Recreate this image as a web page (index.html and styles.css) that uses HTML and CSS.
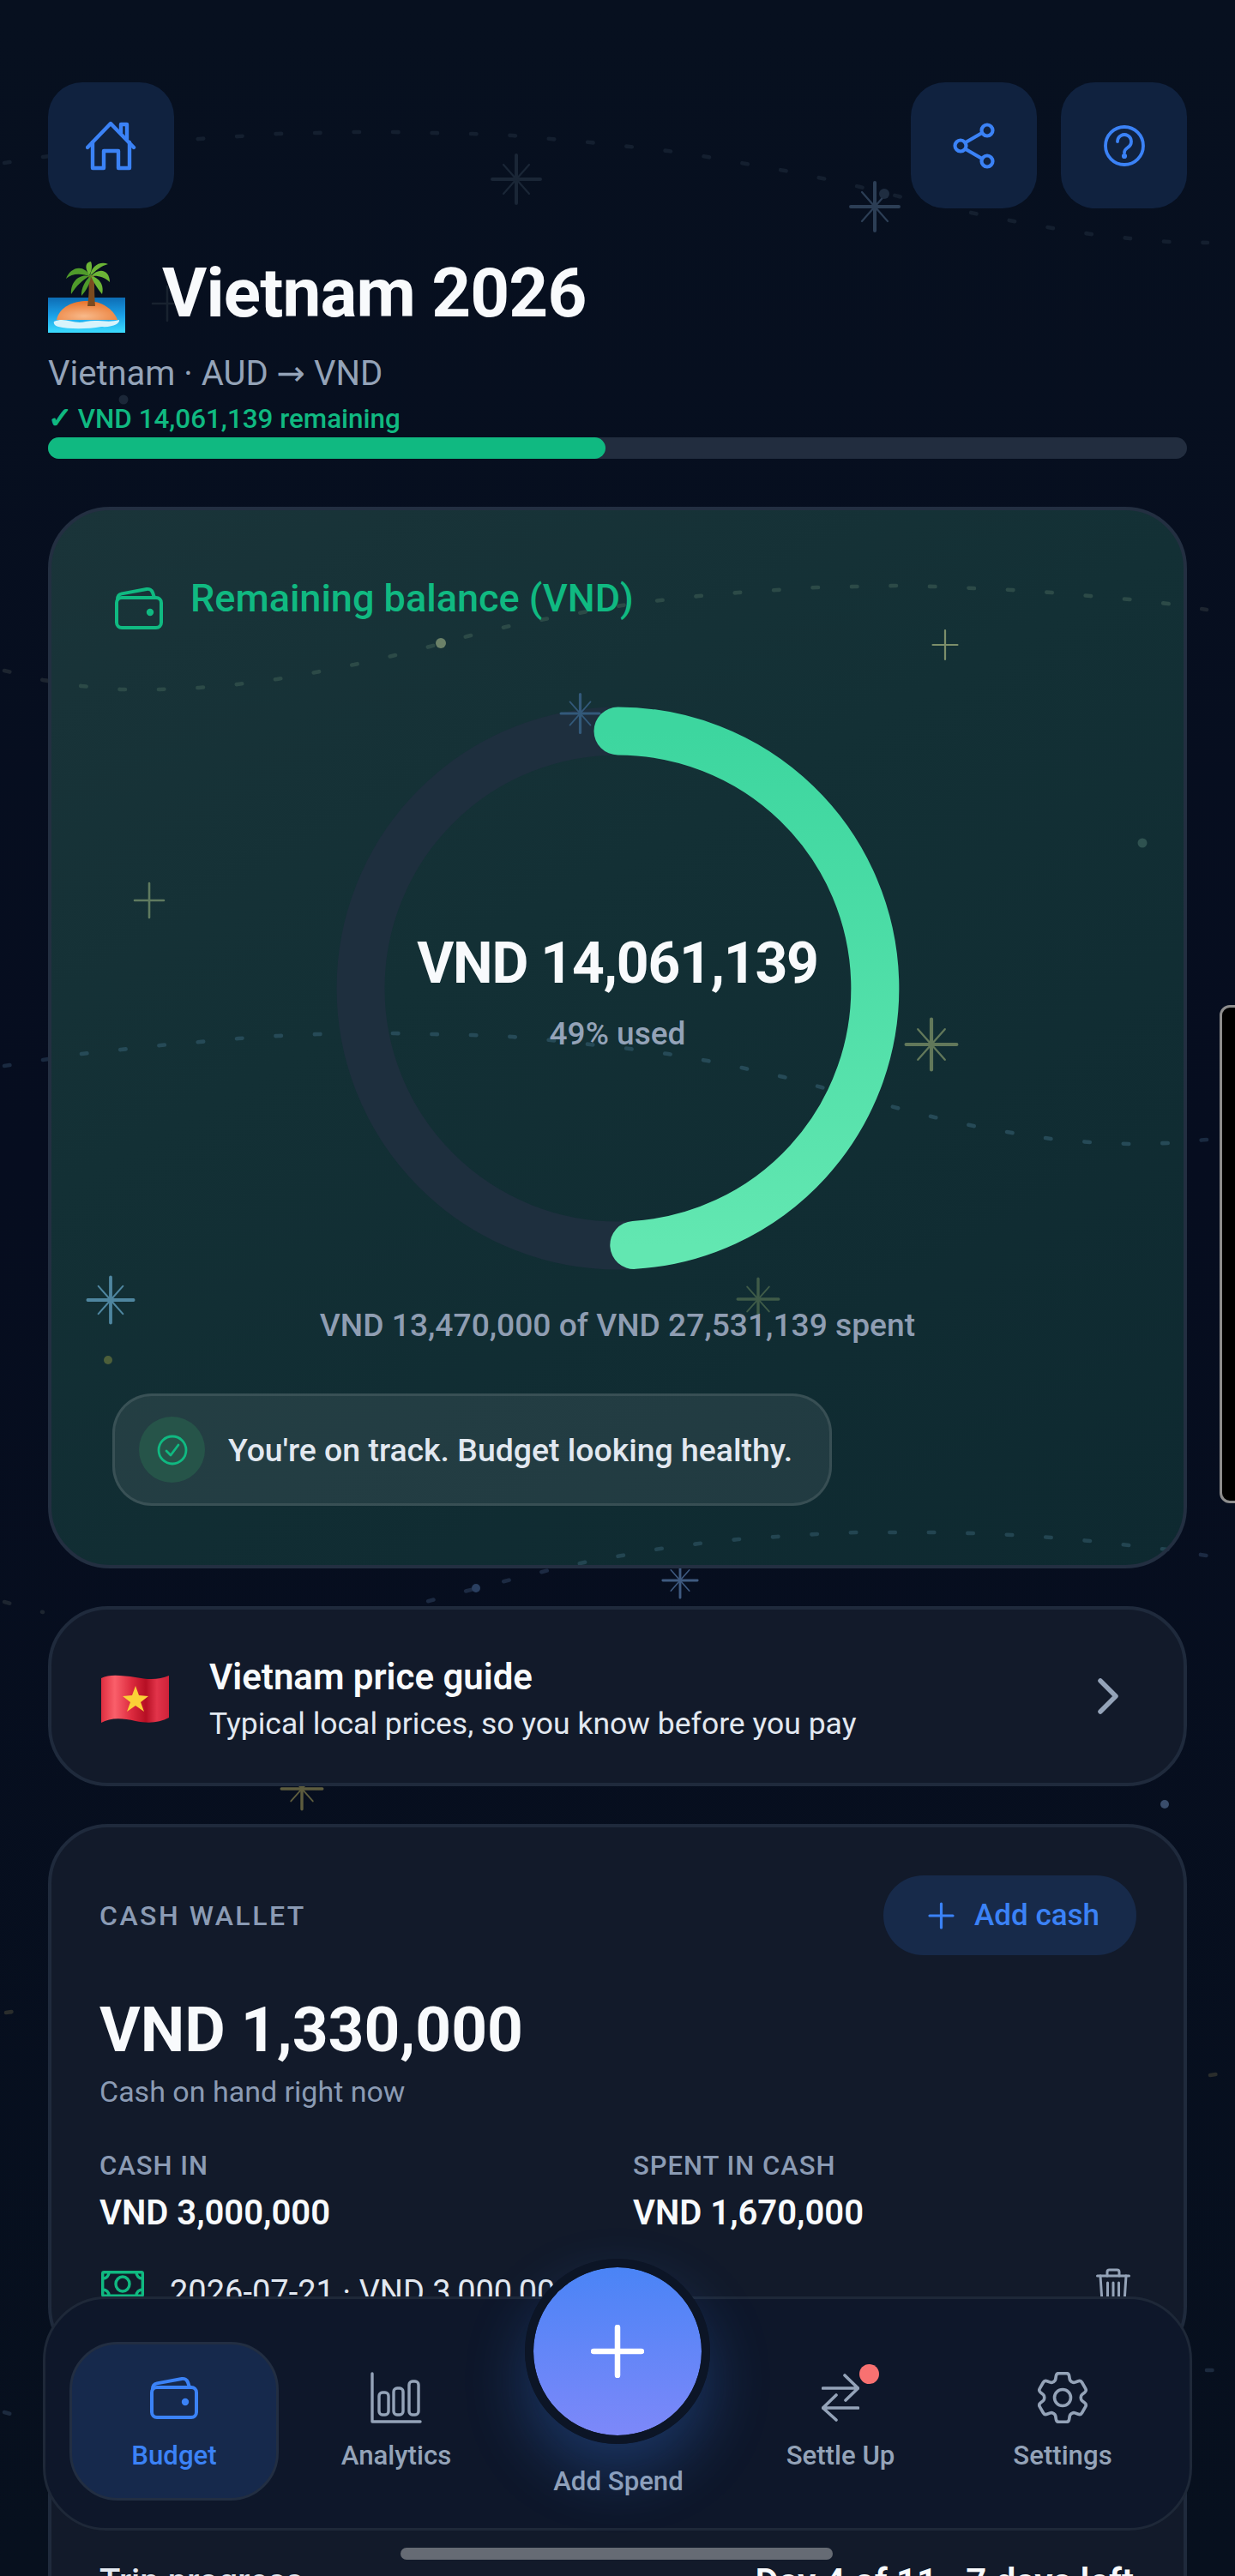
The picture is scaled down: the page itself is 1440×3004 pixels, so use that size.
FILE: index.html
```html
<!DOCTYPE html>
<html lang="en">
<head>
  <meta charset="UTF-8">
  <meta name="viewport" content="width=device-width, initial-scale=1.0">
  <title>Vietnam 2026</title>
  <link rel="stylesheet" href="styles.css">
</head>
<body>
<div class="page">

  <!-- decorative constellation behind the cards -->
  <svg class="sky" viewBox="0 0 1440 3004" fill="none" stroke-linecap="round" aria-hidden="true">
    <defs>
      <g id="spark">
        <path d="M-28 0H28M0 -28V28" stroke-width="4"/>
        <path d="M-15 -17L15 17M15 -17L-15 17" stroke-width="2.2"/>
      </g>
      <path id="plus" d="M-17 0H17M0 -20V20" stroke-width="2.6"/>
      <polyline id="line1" class="dash" points="5,190 50,183 96,177 142,171 187,166 232,162 278,159 324,156 370,155 415,154 460,154 506,155 551,156 597,158 642,162 688,166 734,171 779,176 825,183 870,191 915,199 959,208 1003,218 1048,229 1092,239 1137,249 1182,258 1227,266 1272,273 1317,278 1363,282 1408,283"/>
      <polyline id="line2" class="dash" points="5,782 50,793 95,800 141,804 186,804 232,802 277,798 323,792 368,784 413,775 457,765 501,754 545,742 590,731 635,722 680,714 725,706 770,700 815,695 861,691 906,688 952,685 997,684 1043,683 1089,684 1135,686 1180,688 1226,691 1271,695 1317,699 1362,704 1407,711"/>
      <polyline id="line3" class="dash" points="5,1243 50,1236 95,1229 141,1224 187,1219 233,1215 278,1211 324,1208 370,1206 415,1205 460,1205 506,1206 551,1207 597,1209 642,1213 688,1218 734,1223 779,1229 825,1237 869,1246 914,1256 958,1268 1002,1280 1046,1292 1090,1303 1135,1313 1180,1321 1225,1328 1271,1332 1316,1334 1362,1333 1407,1329"/>
      <polyline id="line4" class="dash" points="455,1878 500,1867 545,1855 592,1843 636,1832 681,1822 725,1814 770,1806 815,1800 861,1795 906,1792 952,1789 998,1787 1044,1787 1090,1787 1135,1788 1180,1790 1226,1793 1271,1797 1317,1802 1362,1807 1407,1814"/>
    </defs>

    <use href="#line1" stroke="#141f2f"/>
    <use href="#line2" stroke="#1d2530"/>
    <use href="#line3" stroke="#1a2a40"/>
    <use href="#line4" stroke="#1c2a42"/>
    <polyline class="dash" stroke="#1d2530" points="5,1868 50,1880"/>
    <polyline class="dash" stroke="#2a2d2c" points="7,2347 51,2341"/>
    <polyline class="dash" stroke="#2a2d2c" points="1411,2420 1430,2417"/>
    <polyline class="dash" stroke="#1c2a3e" points="5,2813 46,2824"/>
    <polyline class="dash" stroke="#1c2a3e" points="1407,2764 1430,2764"/>

    <use href="#spark" transform="translate(602 209)" stroke="#1a2636"/>
    <use href="#spark" transform="translate(1020 241)" stroke="#2c3e55"/>
    <use href="#plus" transform="translate(195 354)" stroke="#18222f"/>
    <use href="#spark" transform="translate(793 1843) scale(.72)" stroke="#3f5a80"/>
    <use href="#spark" transform="translate(352 2086) scale(.85)" stroke="#5d5c3e"/>

    <g stroke="none">
      <circle cx="1031" cy="226" r="6" fill="#1f2d40"/>
      <circle cx="144" cy="466" r="5.5" fill="#1b2738"/>
      <circle cx="555" cy="1852" r="5" fill="#2a3f60"/>
      <circle cx="1358" cy="2104" r="5" fill="#3a4d6b"/>
    </g>
  </svg>

  <header class="topbar">
    <a class="icon-btn">
      <svg width="60" height="58" viewBox="0 0 60 58" fill="none" stroke="#3b82f6" stroke-width="4.4" stroke-linecap="round" stroke-linejoin="round">
        <path d="M2 31L29 3L56 31"/>
        <path d="M41 14V4H48V21"/>
        <path d="M8 25V55H21V35H38V55H51V25"/>
      </svg>
    </a>
    <div class="topbar-right">
      <a class="icon-btn">
        <svg width="50" height="54" viewBox="0 0 50 54" fill="none" stroke="#3b82f6" stroke-width="4.2">
          <circle cx="9" cy="27" r="6.5"/>
          <circle cx="40" cy="9" r="6.5"/>
          <circle cx="40" cy="45" r="6.5"/>
          <path d="M15 23L34 12M15 31L34 42"/>
        </svg>
      </a>
      <a class="icon-btn">
        <svg width="50" height="50" viewBox="0 0 50 50" fill="none" stroke="#3b82f6" stroke-width="3.8" stroke-linecap="round">
          <circle cx="25" cy="25" r="22"/>
          <path d="M17 20a8 8 0 1 1 12 7c-3 2-4 3-4 6"/>
          <circle cx="25" cy="37" r="1.2" fill="#3b82f6"/>
        </svg>
      </a>
    </div>
  </header>

  <div class="title-row">
    <svg class="island" width="90" height="83" viewBox="0 0 90 83">
      <defs>
        <linearGradient id="sea" x1="0" y1="0" x2="0" y2="1">
          <stop offset="0" stop-color="#0d6cb4"/>
          <stop offset=".5" stop-color="#1a9fe6"/>
          <stop offset="1" stop-color="#3cdcff"/>
        </linearGradient>
        <radialGradient id="sand" cx=".45" cy=".8" r=".75">
          <stop offset="0" stop-color="#f8b98a"/>
          <stop offset="1" stop-color="#e9772f"/>
        </radialGradient>
      </defs>
      <rect y="42" width="90" height="41" fill="url(#sea)"/>
      <path d="M10 68C13 53 29 46 46 46C62 46 76 55 81 68Z" fill="url(#sand)"/>
      <path d="M7 70C20 64 30 74 44 70C58 67 70 72 83 68C84 72 76 77 62 76C46 79 24 79 12 76C8 75 6 72 7 70Z" fill="#d8f3fb"/>
      <path d="M47 16L54 16C54 28 54 38 55 52L46 52C48 38 48 28 47 16Z" fill="#7b4a1f"/>
      <g fill="#4f9a2b">
        <path d="M50 18C42 2 26 6 21 20C28 14 38 13 50 18Z"/>
        <path d="M48 17C36 14 26 24 27 38C33 28 40 22 48 17Z"/>
        <path d="M50 17C44 20 38 32 39 40C45 33 49 26 50 17Z"/>
      </g>
      <g fill="#6cb536">
        <path d="M49 17C50 6 60 -1 70 3C62 5 56 10 49 17Z"/>
        <path d="M48 16C42 6 44 1 50 0C52 5 51 11 48 16Z"/>
        <path d="M50 17C60 6 72 10 72 24C66 18 58 16 50 17Z"/>
        <path d="M50 17C58 18 66 26 63 38C58 32 53 24 50 17Z"/>
      </g>
    </svg>
    <h1 class="trip-title">Vietnam 2026</h1>
  </div>
  <p class="trip-sub">Vietnam · AUD → VND</p>
  <p class="trip-status"><span class="tick">✓</span> VND 14,061,139 remaining</p>
  <div class="bar"><div class="bar-fill"></div></div>

  <section class="hero">
    <svg class="hero-sky" viewBox="56 591 1328 1238" fill="none" stroke-linecap="round" aria-hidden="true">
      <use href="#line2" stroke="#2c4a47"/>
      <use href="#line3" stroke="#264a57"/>
      <use href="#line4" stroke="#234551"/>
      <use href="#plus" transform="translate(174 1050)" stroke="#5f7a5f"/>
      <use href="#plus" transform="translate(1102 752) scale(.85)" stroke="#7c8e6a"/>
      <use href="#spark" transform="translate(1086 1218) scale(1.05)" stroke="#62785a"/>
      <use href="#spark" transform="translate(129 1516) scale(.95)" stroke="#4f86a0"/>
      <use href="#spark" transform="translate(884 1515) scale(.85)" stroke="#3f5b48"/>
      <g stroke="none">
        <circle cx="514" cy="750" r="6" fill="#6b8168"/>
        <circle cx="1332" cy="983" r="5.5" fill="#2f5250"/>
        <circle cx="126" cy="1586" r="5" fill="#4d5f3a"/>
      </g>
    </svg>

    <div class="hero-head">
      <svg class="hero-wallet" width="56" height="50" viewBox="0 0 56 50" fill="none" stroke="#10b981" stroke-width="4" stroke-linecap="round" stroke-linejoin="round">
        <rect x="2" y="13" width="52" height="35" rx="6"/>
        <path d="M3 15C3 11 5 9 8 8.400L37 3C40 2.500 43 4 44 7L46 13"/>
        <circle cx="41" cy="30" r="2.200" fill="#10b981"/>
      </svg>
      <h2 class="hero-label">Remaining balance (VND)</h2>
    </div>

    <div class="ring">
      <svg class="ring-svg" width="657" height="657" viewBox="0 0 657 657" fill="none" stroke-linecap="round">
        <defs>
          <linearGradient id="ringGrad" x1="0" y1="0" x2="0" y2="1">
            <stop offset="0" stop-color="#3dd69f"/>
            <stop offset="1" stop-color="#62e7b1"/>
          </linearGradient>
        </defs>
        <circle cx="328.500" cy="328.500" r="300" stroke="#1e2f3e" stroke-width="56"/>
        <use href="#spark" transform="translate(284.500 8) scale(.8)" stroke="#33597a"/>
        <path d="M328.500 28.500A300 300 0 0 1 347.300 627.900" stroke="url(#ringGrad)" stroke-width="56"/>
      </svg>
      <div class="ring-text">
        <div class="ring-value">VND 14,061,139</div>
        <div class="ring-used">49% used</div>
      </div>
    </div>

    <p class="hero-spent">VND 13,470,000 of VND 27,531,139 spent</p>

    <div class="pill">
      <span class="pill-icon">
        <svg width="36" height="36" viewBox="0 0 36 36" fill="none" stroke="#10b981" stroke-width="2.800" stroke-linecap="round" stroke-linejoin="round">
          <circle cx="18" cy="18" r="16"/>
          <path d="M11 19L16 24L25 12"/>
        </svg>
      </span>
      <span class="pill-text">You're on track. Budget looking healthy.</span>
    </div>
  </section>

  <a class="card guide">
    <svg class="guide-flag" width="79" height="57" viewBox="0 0 79 57">
      <defs>
        <linearGradient id="flagRed" x1="0" y1="0" x2="1" y2="0">
          <stop offset="0" stop-color="#dd2e40"/>
          <stop offset=".2" stop-color="#fa5f6a"/>
          <stop offset=".45" stop-color="#dc2a3e"/>
          <stop offset=".66" stop-color="#b60f24"/>
          <stop offset=".82" stop-color="#e2344a"/>
          <stop offset="1" stop-color="#cf2239"/>
        </linearGradient>
      </defs>
      <path d="M0 4C10 -1 24 1 40 3C55 6 68 6 79 1V50C68 56 55 57 40 54C24 50 10 50 0 56Z" fill="url(#flagRed)"/>
      <polygon points="40,13 44,24 55,25 46,32 50,43 40,36 30,43 34,32 25,25 36,24" fill="#fbd137"/>
    </svg>
    <div class="guide-body">
      <div class="guide-title">Vietnam price guide</div>
      <div class="guide-sub">Typical local prices, so you know before you pay</div>
    </div>
    <svg class="guide-chevron" width="24" height="42" viewBox="0 0 24 42" fill="none" stroke="#94a3b8" stroke-width="5.500" stroke-linecap="round" stroke-linejoin="round">
      <path d="M3 3L21 21L3 39"/>
    </svg>
  </a>

  <section class="card wallet">
    <div class="wallet-head">
      <h3 class="eyebrow">CASH WALLET</h3>
      <a class="add-btn">
        <svg width="31" height="32" viewBox="0 0 31 32" fill="none" stroke="#3b82f6" stroke-width="3.200" stroke-linecap="round">
          <path d="M2 16H29M15.500 2V30"/>
        </svg>
        Add cash
      </a>
    </div>
    <div class="wallet-amount">VND 1,330,000</div>
    <div class="wallet-note">Cash on hand right now</div>
    <div class="wallet-stats">
      <div>
        <div class="stat-label">CASH IN</div>
        <div class="stat-value">VND 3,000,000</div>
      </div>
      <div>
        <div class="stat-label">SPENT IN CASH</div>
        <div class="stat-value">VND 1,670,000</div>
      </div>
    </div>
    <div class="entry">
      <svg width="50" height="31" viewBox="0 0 50 31" fill="none" stroke="#10b981" stroke-width="3.400">
        <rect x="1.700" y="1.700" width="46.600" height="27.600" rx="1.500"/>
        <ellipse cx="25" cy="15.500" rx="8" ry="8.500"/>
        <path d="M2 9C6 9 9 6 9 2M48 9C44 9 41 6 41 2M2 22C6 22 9 25 9 29M48 22C44 22 41 25 41 29"/>
      </svg>
      <span class="entry-text">2026-07-21 · VND 3,000,000</span>
      <svg class="entry-trash" width="40" height="52" viewBox="0 0 40 52" fill="none" stroke="#94a3b8" stroke-width="3" stroke-linecap="round" stroke-linejoin="round">
        <path d="M1.500 9H38.500"/>
        <path d="M13 9V4.500A2.500 2.500 0 0 1 15.500 2H24.500A2.500 2.500 0 0 1 27 4.500V9"/>
        <path d="M5 9L7.500 47A3 3 0 0 0 10.500 50H29.500A3 3 0 0 0 32.500 47L35 9"/>
        <path d="M13.500 17V42M20 17V42M26.500 17V42"/>
      </svg>
    </div>
  </section>

  <section class="card trip">
    <div class="trip-row">
      <span class="trip-name">Trip progress</span>
      <span class="trip-days">Day 4 of 11 · 7 days left</span>
    </div>
  </section>

  <nav class="nav">
    <a class="nav-item active">
      <span class="nav-icon">
        <svg width="56" height="50" viewBox="0 0 56 50" fill="none" stroke="#3b82f6" stroke-width="4" stroke-linecap="round" stroke-linejoin="round">
          <rect x="2" y="13" width="52" height="35" rx="6"/>
          <path d="M3 15C3 11 5 9 8 8.400L37 3C40 2.500 43 4 44 7L46 13"/>
          <circle cx="41" cy="30" r="2.200" fill="#3b82f6"/>
        </svg>
      </span>
      Budget
    </a>
    <a class="nav-item">
      <span class="nav-icon">
        <svg width="60" height="60" viewBox="0 0 60 60" fill="none" stroke="#94a3b8" stroke-width="3.400" stroke-linecap="round" stroke-linejoin="round">
          <path d="M2 2V58H58"/>
          <rect x="10" y="24" width="11" height="26" rx="4"/>
          <rect x="27" y="19" width="11" height="31" rx="4"/>
          <rect x="45" y="11" width="11" height="39" rx="4"/>
        </svg>
      </span>
      Analytics
    </a>
    <a class="nav-item nav-add">
      <span class="fab">
        <svg width="62" height="62" viewBox="0 0 62 62" fill="none" stroke="#fff" stroke-width="6.500" stroke-linecap="round">
          <path d="M3 31H59M31 3V59"/>
        </svg>
      </span>
      Add Spend
    </a>
    <a class="nav-item">
      <span class="nav-icon settle">
        <svg width="44" height="56" viewBox="0 0 44 56" fill="none" stroke="#94a3b8" stroke-width="3.600" stroke-linecap="round" stroke-linejoin="round">
          <path d="M1.500 17H42.500M27 2L42.500 17L28 31"/>
          <path d="M42.500 40H1.500M17 25L1.500 40L17 54"/>
        </svg>
        <span class="dot"></span>
      </span>
      Settle Up
    </a>
    <a class="nav-item">
      <span class="nav-icon">
        <svg width="60" height="60" viewBox="2.500 2.500 19 19" fill="none" stroke="#94a3b8" stroke-width="1.150" stroke-linecap="round" stroke-linejoin="round">
          <path d="M9.594 3.940c.09-.542.56-.94 1.110-.94h2.593c.55 0 1.020.398 1.110.94l.213 1.281c.063.374.313.686.645.870.074.040.147.083.220.127.324.196.720.257 1.075.124l1.217-.456a1.125 1.125 0 011.370.490l1.296 2.247a1.125 1.125 0 01-.260 1.431l-1.003.827c-.293.240-.438.613-.431.992a6.759 6.759 0 010 .255c-.007.378.138.750.430.990l1.005.828c.424.350.534.954.260 1.430l-1.298 2.247a1.125 1.125 0 01-1.369.491l-1.217-.456c-.355-.133-.750-.072-1.076.124a6.570 6.570 0 01-.220.128c-.331.183-.581.495-.644.869l-.213 1.280c-.09.543-.56.941-1.110.941h-2.594c-.55 0-1.020-.398-1.110-.94l-.213-1.281c-.062-.374-.312-.686-.644-.870a6.520 6.520 0 01-.220-.127c-.325-.196-.720-.257-1.076-.124l-1.217.456a1.125 1.125 0 01-1.369-.490l-1.297-2.247a1.125 1.125 0 01.260-1.431l1.004-.827c.292-.240.437-.613.430-.992a6.932 6.932 0 010-.255c.007-.378-.138-.750-.430-.990l-1.004-.828a1.125 1.125 0 01-.260-1.430l1.297-2.247a1.125 1.125 0 011.370-.491l1.216.456c.356.133.751.072 1.076-.124.072-.044.146-.087.220-.128.332-.183.582-.495.644-.869l.214-1.281z"/>
          <circle cx="12" cy="12" r="3"/>
        </svg>
      </span>
      Settings
    </a>
  </nav>

  <div class="home-bar"></div>
  <div class="side-handle"></div>
</div>
</body>
</html>
```

FILE: styles.css
```css
* {
  box-sizing: border-box;
}
html, body {
  margin: 0;
  background-color: #07101f;
}
body {
  font-family: Roboto, "DejaVu Sans", sans-serif;
  color: #f8fafc;
}
h1, h2, h3, p {
  margin: 0;
  font-weight: inherit;
}
a {
  color: inherit;
  text-decoration: none;
}
svg {
  display: block;
}
.page {
  position: relative;
  height: 3004px;
  padding: 96px 56px 0;
  overflow: hidden;
  background: linear-gradient(180deg, #07101f 0%, #060d1f 45%, #07101e 100%);
}
.sky {
  position: absolute;
  top: 0;
  left: 0;
  width: 1440px;
  height: 3004px;
}
.dash {
  fill: none;
  stroke-width: 4.6;
  stroke-linecap: round;
  stroke-dasharray: 6.500 39;
}

/* top buttons */
.topbar, .title-row, .trip-sub, .trip-status, .bar, .hero, .card {
  position: relative;
}
.topbar {
  display: flex;
  justify-content: space-between;
}
.topbar-right {
  display: flex;
  gap: 28px;
}
.icon-btn {
  width: 147px;
  height: 147px;
  border-radius: 40px;
  background-color: #10223f;
  display: flex;
  align-items: center;
  justify-content: center;
}

/* title block */
.title-row {
  display: flex;
  align-items: flex-end;
  gap: 43px;
  margin-top: 53px;
}
.trip-title {
  font-size: 80px;
  line-height: 92px;
  font-weight: 700;
  letter-spacing: -0.8px;
}
.trip-sub {
  margin-top: 26px;
  font-size: 40px;
  line-height: 44px;
  color: #94a3b8;
}
.trip-status {
  margin-top: 13px;
  height: 36px;
  font-size: 31.400px;
  line-height: 36px;
  font-weight: 500;
  color: #10b981;
}
.tick {
  display: inline-block;
  width: 27px;
  font-size: 34px;
  line-height: 30px;
  font-weight: 700;
  -webkit-text-stroke: 1.200px #10b981;
}
.bar {
  margin-top: 3px;
  height: 25px;
  border-radius: 13px;
  background-color: #222d3f;
}
.bar-fill {
  width: 650px;
  height: 100%;
  border-radius: 13px;
  background-color: #10b981;
}

/* remaining balance card */
.hero {
  margin-top: 56px;
  height: 1238px;
  padding: 77px 71px 0;
  border: 4px solid #232f41;
  border-radius: 72px;
  overflow: hidden;
  background: linear-gradient(150deg, #1a3439 0%, #133035 40%, #0e2930 100%);
}
.hero-sky {
  position: absolute;
  top: -4px;
  left: -4px;
  width: 1328px;
  height: 1238px;
}
.hero-head, .ring, .hero-spent, .pill {
  position: relative;
}
.hero-head {
  display: flex;
  align-items: flex-start;
  gap: 32px;
  padding-left: 3px;
}
.hero-wallet {
  margin-top: 12px;
}
.hero-label {
  font-size: 45px;
  line-height: 52px;
  font-weight: 500;
  color: #10b981;
}
.ring {
  width: 657px;
  height: 657px;
  margin: 90px auto 0;
}
.ring-svg {
  overflow: visible;
}
.ring-text {
  position: absolute;
  inset: 0;
  padding-top: 7px;
  display: flex;
  flex-direction: column;
  align-items: center;
  justify-content: center;
}
.ring-value {
  font-size: 66px;
  line-height: 76px;
  font-weight: 700;
  letter-spacing: -1.2px;
}
.ring-used {
  margin-top: 23px;
  font-size: 37px;
  line-height: 42px;
  font-weight: 500;
  color: #94a3b8;
}
.hero-spent {
  margin-top: 43px;
  font-size: 37.200px;
  line-height: 42px;
  font-weight: 500;
  text-align: center;
  color: #8f9db2;
}
.pill {
  display: inline-flex;
  align-items: center;
  gap: 27px;
  margin-top: 59px;
  height: 131px;
  padding: 0 43px 0 28px;
  border: 3px solid rgba(255, 255, 255, 0.1);
  border-radius: 46px;
  background-color: rgba(255, 255, 255, 0.08);
}
.pill-icon {
  width: 77px;
  height: 77px;
  border-radius: 50%;
  background-color: #265449;
  display: flex;
  align-items: center;
  justify-content: center;
}
.pill-text {
  font-size: 37.400px;
  font-weight: 500;
  color: #e2e8f0;
}

/* plain cards */
.card {
  display: block;
  margin-top: 44px;
  border: 4px solid #1f2a3c;
  border-radius: 70px;
  background-color: #121a2a;
}
.guide {
  display: flex;
  align-items: center;
  height: 210px;
  padding: 0 76px 0 58px;
}
.guide-flag {
  margin-top: 6px;
}
.guide-body {
  margin-left: 47px;
  padding-top: 6px;
}
.guide-title {
  font-size: 42px;
  line-height: 48px;
  font-weight: 600;
}
.guide-sub {
  margin-top: 9px;
  font-size: 35.500px;
  line-height: 42px;
  color: #e2e8f0;
}
.guide-chevron {
  margin-left: auto;
}

/* cash wallet */
.wallet {
  height: 633px;
  padding: 56px 55px 0 56px;
}
.wallet-head {
  display: flex;
  align-items: center;
  justify-content: space-between;
}
.eyebrow {
  font-size: 32px;
  font-weight: 500;
  letter-spacing: 2.500px;
  color: #8b9bb4;
}
.add-btn {
  display: flex;
  align-items: center;
  gap: 23px;
  height: 93px;
  padding: 0 43px 0 52px;
  border-radius: 47px;
  background-color: #172a4a;
  font-size: 35px;
  font-weight: 500;
  color: #3b82f6;
}
.wallet-amount {
  margin-top: 45px;
  font-size: 73px;
  line-height: 84px;
  font-weight: 700;
}
.wallet-note {
  margin-top: 10px;
  font-size: 34px;
  line-height: 40px;
  color: #8b9bb4;
}
.wallet-stats {
  display: grid;
  grid-template-columns: 1fr 1fr;
  gap: 35px;
  margin-top: 49px;
}
.stat-label {
  font-size: 31px;
  line-height: 36px;
  font-weight: 500;
  letter-spacing: 1px;
  color: #8b9bb4;
}
.stat-value {
  margin-top: 14px;
  font-size: 40px;
  line-height: 46px;
  font-weight: 600;
}
.entry {
  display: flex;
  align-items: flex-start;
  gap: 30px;
  margin-top: 44px;
  padding-left: 2px;
}
.entry-text {
  margin-top: 3px;
  font-size: 38px;
  line-height: 44px;
  color: #e2e8f0;
}
.entry-trash {
  margin: -3px 7px 0 auto;
}

/* next card, mostly below the fold */
.trip {
  height: 400px;
  padding: 181px 58px 0 56px;
}
.trip-row {
  display: flex;
  justify-content: space-between;
  line-height: 44px;
}
.trip-name {
  font-size: 40px;
  font-weight: 500;
  color: #e2e8f0;
}
.trip-days {
  font-size: 42px;
  font-weight: 600;
}

/* bottom navigation, floats over the page */
.nav {
  position: absolute;
  top: 2678px;
  left: 50px;
  width: 1340px;
  height: 273px;
  padding: 50px 26px 35px 28px;
  display: grid;
  grid-template-columns: repeat(5, 244px);
  gap: 15px;
  border: 3px solid #1e2838;
  border-radius: 74px;
  background-color: #0e172a;
}
.nav-item {
  position: relative;
  display: flex;
  flex-direction: column;
  align-items: center;
  padding-top: 31px;
  border: 3px solid transparent;
  border-radius: 56px;
  font-size: 31.200px;
  line-height: 38px;
  font-weight: 500;
  color: #94a3b8;
}
.nav-item.active {
  background-color: #16294c;
  border-color: #222e42;
  color: #3b82f6;
}
.nav-icon {
  position: relative;
  height: 62px;
  margin-bottom: 18px;
  display: flex;
  align-items: center;
  justify-content: center;
}
.nav-add {
  padding-top: 141px;
}
.fab {
  position: absolute;
  top: -100px;
  left: 10px;
  width: 216px;
  height: 216px;
  border: 10px solid #0c1526;
  border-radius: 50%;
  background: linear-gradient(180deg, #4a84f6 0%, #7d88f9 100%);
  background-clip: padding-box;
  box-shadow: 0 34px 70px rgba(59, 130, 246, 0.28);
  display: flex;
  align-items: center;
  justify-content: center;
}
.dot {
  position: absolute;
  top: -8px;
  right: -23px;
  width: 23px;
  height: 23px;
  border-radius: 50%;
  background-color: #f87171;
}

.home-bar {
  position: absolute;
  top: 2971px;
  left: 467px;
  width: 504px;
  height: 14px;
  border-radius: 7px;
  background-color: #666b74;
}
.side-handle {
  position: absolute;
  top: 1172px;
  right: -14px;
  width: 32px;
  height: 581px;
  border: 3px solid #8d8d8d;
  border-radius: 12px;
  background-color: #000;
}
```
